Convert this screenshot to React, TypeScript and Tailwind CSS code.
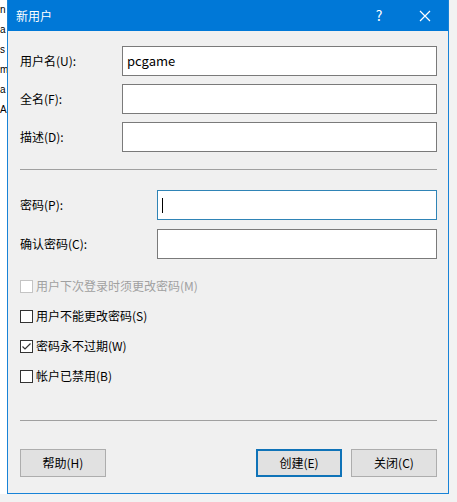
import React from 'react';

const font = { fontFamily: '"Microsoft YaHei UI", "Noto Sans CJK SC", "Noto Sans", sans-serif' };

function Field({ label, labelW, value, focused }: { label: string; labelW: string; value?: string; focused?: boolean }) {
  return (
    <div className="flex items-center h-[30px]">
      <div className={`${labelW} shrink-0 text-[12px] text-black`}>{label}</div>
      <div
        className={`flex-1 h-[30px] bg-white border flex items-center px-[4px] text-[13px] text-black ${
          focused ? 'border-[#2f84b6]' : 'border-[#7a7a7a]'
        }`}
      >
        {value}
        {focused && <div className="w-[1px] h-[15px] bg-black" />}
      </div>
    </div>
  );
}

function Check({ label, checked, disabled }: { label: string; checked?: boolean; disabled?: boolean }) {
  return (
    <div className="flex items-center h-[30px] gap-[3px]">
      <div
        className={`w-[13px] h-[13px] border bg-white flex items-center justify-center ${
          disabled ? 'border-[#c4c4c4]' : 'border-[#333333]'
        }`}
      >
        {checked && (
          <svg width="11" height="11" viewBox="0 0 11 11">
            <path d="M1.5 5.5 L4 8 L9.5 2.5" fill="none" stroke="#333" strokeWidth="1.2" />
          </svg>
        )}
      </div>
      <span className={`text-[12px] ${disabled ? 'text-[#a0a0a0]' : 'text-black'}`}>{label}</span>
    </div>
  );
}

function Btn({ label, primary }: { label: string; primary?: boolean }) {
  return (
    <div
      className={`w-[86px] h-[28px] bg-[#e1e1e1] flex items-center justify-center text-[12px] text-black ${
        primary ? 'border-2 border-[#0f73b8]' : 'border border-[#adadad]'
      }`}
    >
      {label}
    </div>
  );
}

export default function App() {
  // bits of the window behind the dialog
  const behind = ['n', 'a', 's', 'm', 'a', 'A'];
  return (
    <div className="w-[457px] h-[502px] bg-[#f2f2f2] flex overflow-hidden" style={font}>
      <div className="w-[7px] shrink-0 h-[494px] bg-white overflow-hidden">
        {behind.map((t, i) => (
          <div
            key={i}
            className="h-[20px] text-[10px] text-black leading-[20px]"
            style={{ fontFamily: '"Liberation Sans", sans-serif' }}
          >
            {t}
          </div>
        ))}
      </div>
      <div className="w-[442px] h-[494px] shrink-0 border border-t-0 border-[#1883d7] bg-[#f0f0f0] flex flex-col">
        <div className="h-[31px] bg-[#0078d7] flex items-center pl-[8px] text-white text-[12px] shrink-0">
          <span className="flex-1">新用户</span>
          <span className="w-[46px] text-center text-[14px]">?</span>
          <span className="w-[46px] flex justify-center">
            <svg width="12" height="12" viewBox="0 0 12 12">
              <path d="M1 1 L11 11 M11 1 L1 11" stroke="white" strokeWidth="1.2" />
            </svg>
          </span>
        </div>
        <div className="flex-1 flex flex-col pl-[12px] pr-[11px] pt-[15px]">
          <div className="flex flex-col gap-[8px]">
            <Field label="用户名(U):" labelW="w-[102px]" value="pcgame" />
            <Field label="全名(F):" labelW="w-[102px]" />
            <Field label="描述(D):" labelW="w-[102px]" />
          </div>
          <div className="h-[1px] bg-[#a0a0a0] mt-[17px]" />
          <div className="flex flex-col gap-[9px] mt-[20px]">
            <Field label="密码(P):" labelW="w-[137px]" focused />
            <Field label="确认密码(C):" labelW="w-[137px]" />
          </div>
          <div className="flex flex-col mt-[12px]">
            <Check label="用户下次登录时须更改密码(M)" disabled />
            <Check label="用户不能更改密码(S)" />
            <Check label="密码永不过期(W)" checked />
            <Check label="帐户已禁用(B)" />
          </div>
          <div className="h-[1px] bg-[#a0a0a0] mt-[29px]" />
          <div className="flex items-center mt-[28px]">
            <Btn label="帮助(H)" />
            <div className="flex-1" />
            <div className="flex gap-[9px]">
              <Btn label="创建(E)" primary />
              <Btn label="关闭(C)" />
            </div>
          </div>
        </div>
      </div>
    </div>
  );
}
